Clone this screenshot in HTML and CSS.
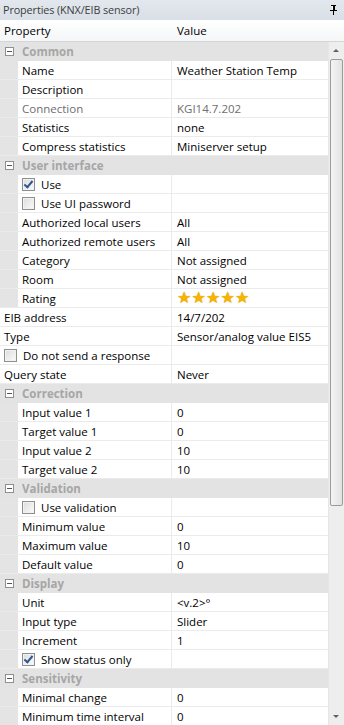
FILE: index.html
```html
<!DOCTYPE html>
<html>
<head>
<meta charset="utf-8">
<link rel="stylesheet" href="styles.css">
</head>
<body>
<div class="panel">
  <div class="titlebar">
    <span class="title">Properties (KNX/EIB sensor)</span>
    <svg class="pin" width="9" height="10" viewBox="0 0 9 10"><path d="M2 0h5v1H6v4h2v1H5v4H4V6H1V5h2V1H2z" fill="#000"/><rect x="3" y="1" width="1" height="4" fill="#fff"/></svg>
  </div>
  <div class="header">
    <div class="hcell hname">Property</div>
    <div class="hcell hval">Value</div>
  </div>
  <div class="body">
    <div class="grid">
      <div class="row cat"><span class="tog"></span><span class="catname">Common</span></div>
      <div class="row sub"><div class="name">Name</div><div class="val">Weather Station Temp</div></div>
      <div class="row sub"><div class="name">Description</div><div class="val"></div></div>
      <div class="row sub ro"><div class="name">Connection</div><div class="val">KGI14.7.202</div></div>
      <div class="row sub"><div class="name">Statistics</div><div class="val">none</div></div>
      <div class="row sub"><div class="name">Compress statistics</div><div class="val">Miniserver setup</div></div>
      <div class="row cat"><span class="tog"></span><span class="catname">User interface</span></div>
      <div class="row sub"><div class="name"><span class="cb on"></span>Use</div><div class="val"></div></div>
      <div class="row sub"><div class="name"><span class="cb"></span>Use UI password</div><div class="val"></div></div>
      <div class="row sub"><div class="name">Authorized local users</div><div class="val">All</div></div>
      <div class="row sub"><div class="name">Authorized remote users</div><div class="val">All</div></div>
      <div class="row sub"><div class="name">Category</div><div class="val">Not assigned</div></div>
      <div class="row sub"><div class="name">Room</div><div class="val">Not assigned</div></div>
      <div class="row sub"><div class="name">Rating</div><div class="val stars"><span>★</span><span>★</span><span>★</span><span>★</span><span>★</span></div></div>
      <div class="row top"><div class="name">EIB address</div><div class="val">14/7/202</div></div>
      <div class="row top"><div class="name">Type</div><div class="val">Sensor/analog value EIS5</div></div>
      <div class="row top"><div class="name"><span class="cb"></span>Do not send a response</div><div class="val"></div></div>
      <div class="row top"><div class="name">Query state</div><div class="val">Never</div></div>
      <div class="row cat"><span class="tog"></span><span class="catname">Correction</span></div>
      <div class="row sub"><div class="name">Input value 1</div><div class="val">0</div></div>
      <div class="row sub"><div class="name">Target value 1</div><div class="val">0</div></div>
      <div class="row sub"><div class="name">Input value 2</div><div class="val">10</div></div>
      <div class="row sub"><div class="name">Target value 2</div><div class="val">10</div></div>
      <div class="row cat"><span class="tog"></span><span class="catname">Validation</span></div>
      <div class="row sub"><div class="name"><span class="cb"></span>Use validation</div><div class="val"></div></div>
      <div class="row sub"><div class="name">Minimum value</div><div class="val">0</div></div>
      <div class="row sub"><div class="name">Maximum value</div><div class="val">10</div></div>
      <div class="row sub"><div class="name">Default value</div><div class="val">0</div></div>
      <div class="row cat"><span class="tog"></span><span class="catname">Display</span></div>
      <div class="row sub"><div class="name">Unit</div><div class="val">&lt;v.2&gt;°</div></div>
      <div class="row sub"><div class="name">Input type</div><div class="val">Slider</div></div>
      <div class="row sub"><div class="name">Increment</div><div class="val">1</div></div>
      <div class="row sub"><div class="name"><span class="cb on"></span>Show status only</div><div class="val"></div></div>
      <div class="row cat"><span class="tog"></span><span class="catname">Sensitivity</span></div>
      <div class="row sub"><div class="name">Minimal change</div><div class="val">0</div></div>
      <div class="row sub"><div class="name">Minimum time interval</div><div class="val">0</div></div>
    </div>
    <div class="scrollbar">
      <div class="arrow up"></div>
      <div class="thumb"></div>
      <div class="track"></div>
      <div class="arrow down"></div>
    </div>
  </div>
</div>
</body>
</html>
```

FILE: styles.css
```css
* { box-sizing: border-box; }
html, body { margin: 0; padding: 0; }
body {
  width: 344px;
  height: 725px;
  overflow: hidden;
  background: #fff;
  font-family: "Open Sans", "Noto Sans", sans-serif;
  font-size: 11.5px;
  color: #000;
}
.panel { display: flex; flex-direction: column; height: 725px; }
.titlebar {
  height: 20px;
  flex: none;
  display: flex;
  align-items: center;
  justify-content: space-between;
  padding: 0 6px 0 3px;
  background: linear-gradient(#e3e8ee, #d9dfe6);
  color: #3c3c3c;
}
.title { line-height: 20px; font-size: 10.8px; letter-spacing: -0.1px; }
.pin { display: block; }
.header {
  height: 22px;
  flex: none;
  display: flex;
  background: linear-gradient(#ffffff, #f4f6f8);
  border-bottom: 1px solid #d5d5d5;
}
.hcell { line-height: 21px; }
.hname { width: 172px; padding-left: 4px; }
.hval { flex: 1; padding-left: 5px; }
.body { flex: 1; display: flex; min-height: 0; }
.grid { flex: 1; display: flex; flex-direction: column; overflow: hidden; }
.row {
  height: 19px;
  flex: none;
  display: flex;
  align-items: stretch;
  border-bottom: 1px solid #ebebeb;
}
.row .name {
  width: 172px;
  display: flex;
  align-items: center;
  border-right: 1px solid #ebebeb;
  white-space: nowrap;
}
.row .val {
  flex: 1;
  display: flex;
  align-items: center;
  padding-left: 5px;
  white-space: nowrap;
}
.row.sub { background: linear-gradient(to right, #e4e4e4 18px, #fff 18px); }
.row.sub .name { padding-left: 22px; }
.row.top .name { padding-left: 4px; }
.row.ro { color: #6e6e6e; }
.row.cat {
  background: #e3e3e3;
  border-bottom: 1px solid #e3e3e3;
  align-items: center;
}
.tog {
  width: 9px;
  height: 9px;
  margin-left: 5px;
  border: 1px solid #8f8f8f;
  background: #fff;
  position: relative;
}
.tog::after {
  content: "";
  position: absolute;
  left: 1px; top: 3px;
  width: 5px; height: 1px;
  background: #555;
}
.catname {
  margin-left: 8px;
  font-weight: 700;
  color: #a6a6a6;
}
.cb {
  width: 13px;
  height: 13px;
  flex: none;
  border: 1px solid #8e8f8f;
  background: linear-gradient(135deg, #dcdcdc, #fbfbfb);
  box-shadow: inset 0 0 0 1px #f2f2f2;
  margin-right: 6px;
  position: relative;
}
.cb.on::after {
  content: "";
  position: absolute;
  left: 3px; top: 0px;
  width: 3px; height: 7px;
  border: solid #2f558f;
  border-width: 0 2px 2px 0;
  transform: rotate(40deg);
}
.stars { padding-left: 7px; gap: 0; }
.stars span {
  color: #f7b500;
  font-family: "DejaVu Sans", sans-serif;
  font-size: 16px;
  line-height: 1;
  text-shadow: 0 0 1px #c77f00;
  width: 14.5px;
}
.scrollbar {
  width: 16px;
  flex: none;
  display: flex;
  flex-direction: column;
  background: #eeeeee;
  border-left: 1px solid #e6e6e6;
}
.arrow { height: 17px; flex: none; position: relative; }
.arrow.up::after, .arrow.down::after {
  content: "";
  position: absolute;
  left: 4px;
  border-left: 3px solid transparent;
  border-right: 3px solid transparent;
}
.arrow.up::after { top: 7px; border-bottom: 3px solid #606060; }
.arrow.down::after { top: 7px; border-top: 3px solid #606060; }
.thumb {
  height: 447px;
  flex: none;
  margin: 0 1px;
  border: 1px solid #9b9b9b;
  border-radius: 2px;
  background: linear-gradient(to right, #f4f4f4, #e2e2e2);
}
.track { flex: 1; }
```
